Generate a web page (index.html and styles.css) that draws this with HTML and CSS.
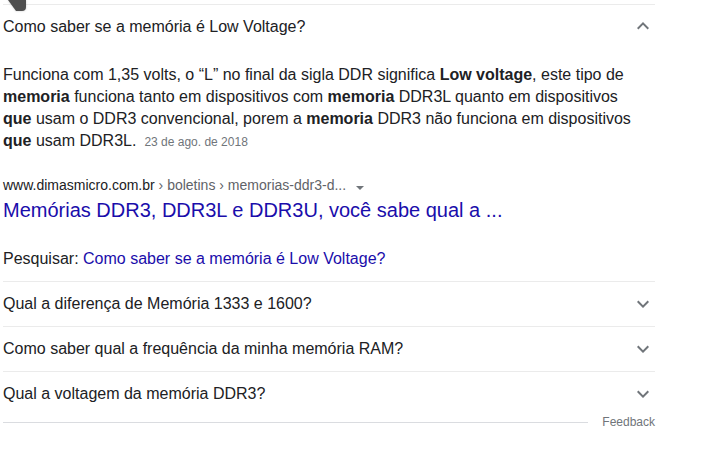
FILE: index.html
```html
<!DOCTYPE html>
<html lang="pt-BR">
  <head>
    <meta charset="utf-8">
    <title>Perguntas relacionadas</title>
    <link rel="stylesheet" href="styles.css">
  </head>
  <body>
    <svg class="tail" width="32" height="14" viewBox="0 0 32 14">
      <path d="M8 0 H26 V7 Q26 11 22 11 H16 Z" fill="#4f4f4f"/>
    </svg>
    <div class="related">
      <div class="row open">
        <span class="q">Como saber se a memória é Low Voltage?</span>
        <svg class="chev" width="24" height="24" viewBox="0 0 24 24"><path d="M7.41 15.41L12 10.83l4.59 4.58L18 14l-6-6-6 6z"/></svg>
      </div>
      <div class="answer">
        <p class="text">Funciona com 1,35 volts, o “L” no final da sigla DDR significa <b>Low voltage</b>, este tipo de <b>memoria</b> funciona tanto em dispositivos com <b>memoria</b> DDR3L quanto em dispositivos <b>que</b> usam o DDR3 convencional, porem a <b>memoria</b> DDR3 não funciona em dispositivos <b>que</b> usam DDR3L.<span class="date">23 de ago. de 2018</span></p>
        <div class="cite">
          <span class="host">www.dimasmicro.com.br</span><span class="crumb"> › boletins › memorias-ddr3-d...</span>
          <span class="tri"></span>
        </div>
        <a class="title" href="#">Memórias DDR3, DDR3L e DDR3U, você sabe qual a ...</a>
        <div class="search">Pesquisar: <a href="#">Como saber se a memória é Low Voltage?</a></div>
      </div>
      <div class="row">
        <span class="q">Qual a diferença de Memória 1333 e 1600?</span>
        <svg class="chev" width="24" height="24" viewBox="0 0 24 24"><path d="M16.59 8.59L12 13.17 7.41 8.59 6 10l6 6 6-6z"/></svg>
      </div>
      <div class="row">
        <span class="q">Como saber qual a frequência da minha memória RAM?</span>
        <svg class="chev" width="24" height="24" viewBox="0 0 24 24"><path d="M16.59 8.59L12 13.17 7.41 8.59 6 10l6 6 6-6z"/></svg>
      </div>
      <div class="row">
        <span class="q">Qual a voltagem da memória DDR3?</span>
        <svg class="chev" width="24" height="24" viewBox="0 0 24 24"><path d="M16.59 8.59L12 13.17 7.41 8.59 6 10l6 6 6-6z"/></svg>
      </div>
      <div class="foot">
        <span class="rule"></span>
        <a class="feedback" href="#">Feedback</a>
      </div>
    </div>
  </body>
</html>
```

FILE: styles.css
```css
body { margin: 0; background: #fff; font-family: "Liberation Sans", Arial, sans-serif; color: #202124; }
a { text-decoration: none; }
.tail { position: absolute; top: 0; left: 0; z-index: 1; filter: drop-shadow(0 0 1px rgba(0, 0, 0, 0.2)); }
.related { width: 652px; margin: 4px 0 0 3px; border-top: 1px solid #ebebeb; }
.row { display: flex; align-items: center; justify-content: space-between; height: 44px; border-top: 1px solid #ebebeb; font-size: 16px; }
.row.open { border-top: 0; height: 43px; }
.row:last-of-type { height: 43px; }
.chev { fill: #70757a; }
.row.open .chev { margin-top: -2px; }
.answer { padding: 16px 0 11px; }
.text { margin: 0; padding-right: 16px; font-size: 16px; line-height: 22px; }
.date { margin-left: 8px; font-size: 12px; color: #70757a; }
.cite { display: flex; align-items: center; margin-top: 22px; font-size: 14px; line-height: 20px; }
.crumb { color: #5f6368; white-space: pre; }
.tri { width: 0; height: 0; margin: 5px 0 0 10px; border-left: 4px solid transparent; border-right: 4px solid transparent; border-top: 4px solid #70757a; }
.title { display: block; margin-top: 2px; font-size: 20px; line-height: 26px; color: #1a0dab; }
.search { margin-top: 25px; font-size: 16px; line-height: 22px; }
.search a { color: #1a0dab; }
.foot { display: flex; align-items: center; height: 12px; }
.rule { flex: 1; border-top: 1px solid #dadce0; }
.feedback { margin-left: 14px; font-size: 12px; line-height: 12px; color: #70757a; }
```
